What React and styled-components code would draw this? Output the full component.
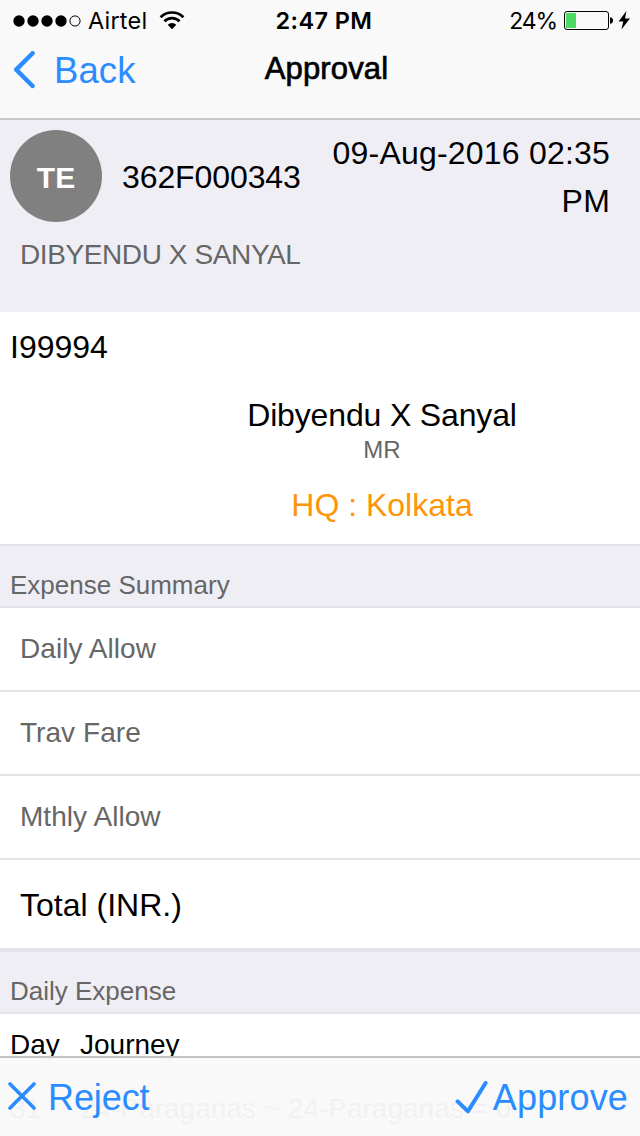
import styled, { createGlobalStyle } from "styled-components"

const summary = ["Daily Allow", "Trav Fare", "Mthly Allow"]

function StatusBar() {
  return (
    <Status>
      <Carrier>
        <svg width="68" height="13" viewBox="0 0 68 13">
          <circle cx="6" cy="6" r="5.7" />
          <circle cx="20" cy="6" r="5.7" />
          <circle cx="34" cy="6" r="5.7" />
          <circle cx="48" cy="6" r="5.7" />
          <circle cx="62" cy="6" r="5.1" fill="none" stroke="#000" />
        </svg>
        <CarrierName>Airtel</CarrierName>
        <svg width="26" height="20" viewBox="0 0 26 20" fill="none" stroke="#000" strokeWidth="2.7">
          <path d="M1.6 6.2a16.2 16.2 0 0 1 22.800 0" />
          <path d="M5.4 10.2a10.8 10.8 0 0 1 15.2 0" />
          <path d="M13 18.200l-4.300-4.400a6 6 0 0 1 8.600 0z" fill="#000" stroke="none" />
        </svg>
      </Carrier>
      <Time>2:47 PM</Time>
      <Power>
        <Percent>24%</Percent>
        <svg width="67" height="22" viewBox="0 0 67 22">
          <rect x="0.5" y="1.5" width="44" height="18" rx="2.5" fill="none" stroke="#000" />
          <rect x="2" y="3" width="10" height="15" fill="#4cd964" />
          <path d="M46 7.2c2 0 3 1.4 3 3.3s-1 3.3-3 3.3z" />
          <path d="M62.4 1L54.6 11.4h4.7L57.4 19.4 66 8.6h-5z" />
        </svg>
      </Power>
    </Status>
  )
}

function App() {
  return (
    <Page>
      <GlobalStyle />
      <Header>
        <StatusBar />
        <NavBar>
          <Back>
            <svg width="22" height="38" viewBox="0 0 22 38" fill="none" stroke="#2b8cff" strokeWidth="4.4" strokeLinecap="round" strokeLinejoin="round">
              <path d="M19.6 2.2L3.200 18.600l16.400 16.400" />
            </svg>
            <BackLabel>Back</BackLabel>
          </Back>
          <Title>Approval</Title>
          <NavEnd />
        </NavBar>
      </Header>

      <Request>
        <RequestTop>
          <Avatar>TE</Avatar>
          <RequestNo>362F000343</RequestNo>
          <RequestDate>09-Aug-2016 02:35 PM</RequestDate>
        </RequestTop>
        <Requester>DIBYENDU X SANYAL</Requester>
      </Request>

      <Employee>
        <Code>I99994</Code>
        <Person>
          <Name>Dibyendu X Sanyal</Name>
          <Role>MR</Role>
          <Place>HQ : Kolkata</Place>
        </Person>
      </Employee>

      <Divider>Expense Summary</Divider>
      {summary.map((label) => (
        <Row key={label}>{label}</Row>
      ))}
      <Total>Total (INR.)</Total>

      <Divider $thick>Daily Expense</Divider>
      <TableHead>
        <Day>Day</Day>
        <Journey>Journey</Journey>
      </TableHead>
      <TableRow>
        <Day>31</Day>
        <Journey>24-Paraganas ~ 24-Paraganas = 0</Journey>
      </TableRow>

      <Footer>
        <Action>
          <svg width="28" height="30" viewBox="0 0 28 30" fill="none" stroke="#2b8cff" strokeWidth="3.6" strokeLinecap="round">
            <path d="M2 2l24 24M26 2L2 26" />
          </svg>
          <RejectLabel>Reject</RejectLabel>
        </Action>
        <Action>
          <svg width="34" height="34" viewBox="0 0 34 34" fill="none" stroke="#2b8cff" strokeWidth="4" strokeLinecap="round" strokeLinejoin="round">
            <path d="M2.6 21.4l10.3 10L30.6 3" />
          </svg>
          <ApproveLabel>Approve</ApproveLabel>
        </Action>
      </Footer>
    </Page>
  )
}

export default App

const GlobalStyle = createGlobalStyle`
body {
  margin: 0;
  background: #fff;
  font-family: "Liberation Sans", Arial, sans-serif;
}

* {
  box-sizing: border-box;
}

svg {
  display: block;
  flex-shrink: 0;
}
`

const Page = styled.div`
position: relative;
width: 640px;
height: 1136px;
overflow: hidden;
background: #fff;
color: #000;
`

const Header = styled.header`
height: 120px;
background: #f9f9f9;
border-bottom: 2px solid #c8c8ca;
`

const Status = styled.div`
height: 40px;
padding: 0 9px 0 13px;
display: grid;
grid-template-columns: 1fr auto 1fr;
align-items: center;
font-family: Inter, sans-serif;
font-size: 23.5px;
line-height: 42px;
`

const Carrier = styled.div`
display: flex;
align-items: center;
`

const CarrierName = styled.span`
margin: 0 12px 0 7px;
letter-spacing: 0.2px;
`

const Time = styled.div`
padding-left: 4px;
font-weight: 600;
letter-spacing: 0.4px;
`

const Power = styled.div`
display: flex;
align-items: center;
justify-content: flex-end;
`

const Percent = styled.span`
margin-right: 7px;
font-size: 23px;
letter-spacing: -1.1px;
`

const NavBar = styled.nav`
height: 60px;
padding-left: 13px;
display: grid;
grid-template-columns: 1fr auto 1fr;
align-items: center;
`

const Back = styled.div`
display: flex;
align-items: center;
gap: 19px;
color: #2b8cff;
font-size: 36.5px;
line-height: 60px;
`

const BackLabel = styled.span`
height: 60px;
line-height: 61px;
letter-spacing: 0.1px;
`

const Title = styled.div`
padding-bottom: 3px;
font-size: 31px;
line-height: 55px;
letter-spacing: 0.15px;
-webkit-text-stroke: 0.7px #000;
`

const NavEnd = styled.div``

const Request = styled.section`
height: 192px;
padding: 9px 10px 0;
background: #efeef5;
`

const RequestTop = styled.div`
height: 96px;
display: flex;
align-items: flex-start;
font-size: 32px;
line-height: 48px;
`

const Avatar = styled.div`
width: 92px;
height: 92px;
margin-top: 1px;
border-radius: 50%;
background: #808080;
color: #fff;
font-size: 30px;
font-weight: bold;
line-height: 95px;
text-align: center;
`

const RequestNo = styled.div`
margin: 24px 0 0 20px;
letter-spacing: -0.1px;
`

const RequestDate = styled.div`
flex: 1;
padding-right: 20px;
letter-spacing: 0.2px;
text-align: right;
`

const Requester = styled.div`
padding-left: 10px;
color: #666;
font-size: 28px;
letter-spacing: -0.4px;
line-height: 60px;
`

const Employee = styled.section`
height: 232px;
padding: 15px 10px 0;
font-size: 32px;
`

const Code = styled.div`
line-height: 40px;
`

const Person = styled.div`
margin-left: 124px;
padding-top: 28px;
text-align: center;
`

const Name = styled.div`
letter-spacing: -0.15px;
line-height: 40px;
`

const Role = styled.div`
color: #666;
font-size: 24px;
line-height: 30px;
`

const Place = styled.div`
color: #ff9408;
line-height: 80px;
`

const Divider = styled.div`
height: ${(p) => (p.$thick ? 66 : 64)}px;
padding: 15px 10px 0;
border-top: ${(p) => (p.$thick ? 4 : 2)}px solid #e3e2e8;
border-bottom: 2px solid #e3e2e8;
background: #efeef5;
color: #666;
font-size: 26px;
line-height: 48px;
`

const Row = styled.div`
height: 84px;
padding: 0 20px;
border-bottom: 2px solid #e3e2e8;
color: #666;
font-size: 28px;
letter-spacing: 0.05px;
line-height: 82px;
`

const Total = styled.div`
height: 88px;
padding: 0 20px;
font-size: 32px;
line-height: 90px;
`

const TableHead = styled.div`
height: 64px;
padding: 0 10px;
display: flex;
border-bottom: 2px solid #e3e2e8;
font-size: 28px;
line-height: 62px;
`

const TableRow = styled.div`
padding: 0 10px;
display: flex;
font-size: 28px;
line-height: 62px;
`

const Day = styled.div`
width: 70px;
`

const Journey = styled.div`
flex: 1;
`

// sits over the list, which shows faintly through it
const Footer = styled.footer`
position: absolute;
left: 0;
right: 0;
bottom: 0;
height: 80px;
padding: 0 12px 0 8px;
display: flex;
justify-content: space-between;
border-top: 2px solid #c3c3c5;
background: rgba(249, 249, 249, 0.97);
`

const Action = styled.div`
height: 77px;
display: flex;
align-items: center;
color: #2b8cff;
font-size: 36px;
line-height: 80px;
`

const RejectLabel = styled.span`
margin-left: 12px;
padding-top: 3px;
letter-spacing: -0.1px;
`

const ApproveLabel = styled.span`
margin-left: 4px;
padding-top: 3px;
letter-spacing: 0.15px;
`
